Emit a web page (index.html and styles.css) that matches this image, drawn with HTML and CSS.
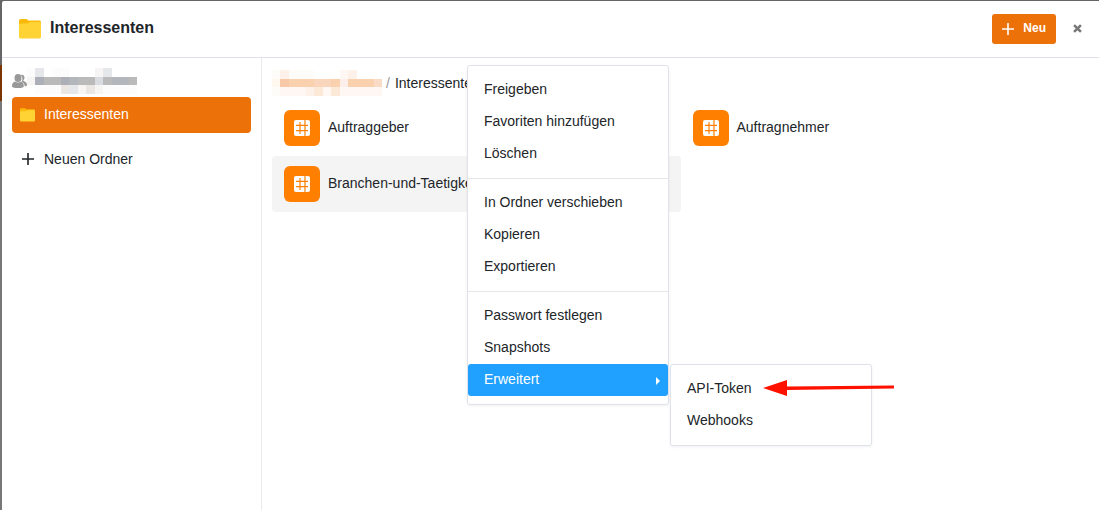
FILE: index.html
```
<!DOCTYPE html>
<html lang="de">

<head>
    <meta charset="utf-8">
    <title>Interessenten</title>
    <meta name="viewport" content="width=device-width, initial-scale=1">
    <link rel="stylesheet" href="styles.css">
</head>

<body>
    <svg class="symbols" aria-hidden="true">
        <symbol id="folder" viewBox="0 0 22 20">
            <path fill="#fbb90c" d="M0 1.5Q0 0 1.5 0h6Q8.500 0 9 1.500h11.500Q22 1.500 22 3v8H0z" />
            <path fill="#ffd333" d="M0 5.500Q0 4.500 1 4.500h8l2-1.500h10q1 0 1 1v14q0 1.500-1.500 1.500h-19Q0 19.500 0 18z" />
        </symbol>
        <symbol id="plus" viewBox="0 0 12 12">
            <path fill="none" stroke="currentColor" stroke-width="1.600" d="M6 0v12M0 6h12" />
        </symbol>
        <symbol id="table" viewBox="0 0 16 16">
            <rect width="16" height="16" rx="2" fill="#fff" />
            <path fill="none" stroke="#ff8000" stroke-width="1.200" d="M6 2v12M11 0v16M2 5.300h12M2 10.600h12" />
        </symbol>
    </svg>
    <div class="dialog">
        <header class="dialog-header">
            <svg class="title-icon"><use href="#folder" /></svg>
            <h1>Interessenten</h1>
            <button type="button" class="btn-new"><svg class="plus"><use href="#plus" /></svg>Neu</button>
            <button type="button" class="btn-close" aria-label="Schließen">
                <svg viewBox="0 0 10 10"><path fill="none" stroke="#777" stroke-width="2.800" d="M1.200 1.200l7.600 7.600M8.800 1.200L1.200 8.800" /></svg>
            </button>
        </header>
        <div class="dialog-body">
            <nav class="sidebar">
                <div class="group">
                    <svg class="group-icon" viewBox="0 0 15 14" fill="#999">
                        <path d="M8.700.9c2-.8 3.800.6 3.800 2.700 0 1.400-.6 2.500-1.300 3.100 2.300.8 3.800 1.800 3.800 4.300 0 1-.7 1.300-2.300 1.300-.2-2.200-1.200-3.700-3.200-4.700C11 5.800 10.700 2.600 8.700.9z" />
                        <ellipse cx="6" cy="4" rx="3.500" ry="4" />
                        <path d="M3 7.500Q6 9.600 9 7.500c1.900.8 2.800 2 2.800 4.500 0 1.400-1.500 2-5.800 2S0 13.400 0 12c0-2.500 1.100-3.700 3-4.500z" />
                    </svg>
                    <svg class="mosaic" viewBox="0 0 13 3" preserveAspectRatio="none" shape-rendering="crispEdges" aria-hidden="true">
                        <path fill="#fcfcfc" d="M0 0h1v1h-1zM3 0h2v1h-2zM1 2h3v1h-3zM9 2h4v1h-4z" />
                        <path fill="#e5e7ea" d="M1 0h1v1h-1zM9 0h1v1h-1zM5 2h1v1h-1z" />
                        <path fill="#f6f5f3" d="M0 1h1v1h-1zM8 0h1v1h-1zM6 2h1v1h-1zM8 2h1v1h-1z" />
                        <path fill="#e9e6e4" d="M4 2h1v1h-1zM7 2h1v1h-1z" />
                        <path fill="#acafb7" d="M1 1h1v1h-1zM4 1h1v1h-1z" />
                        <path fill="#bababa" d="M2 1h2v1h-2zM6 1h2v1h-2zM9 1h1v1h-1zM12 1h1v1h-1z" />
                        <path fill="#b3b7bb" d="M5 1h1v1h-1zM10 1h2v1h-2z" />
                        <path fill="#d8dce1" d="M8 1h1v1h-1z" />
                    </svg>
                </div>
                <a class="nav-item active" href="#"><svg class="nav-icon"><use href="#folder" /></svg>Interessenten</a>
                <button type="button" class="nav-item"><svg class="plus"><use href="#plus" /></svg>Neuen Ordner</button>
            </nav>
            <main>
                <div class="breadcrumb">
                    <svg class="mosaic" viewBox="0 0 13 3" preserveAspectRatio="none" shape-rendering="crispEdges" aria-hidden="true">
                        <path fill="#fefcf9" d="M0 0h1v1h-1zM2 0h3v1h-3zM0 2h1v1h-1z" />
                        <path fill="#fdf1ea" d="M1 0h1v1h-1zM9 0h1v1h-1zM4 2h1v1h-1z" />
                        <path fill="#fef8ee" d="M0 1h1v1h-1z" />
                        <path fill="#fef7f3" d="M8 0h1v1h-1zM1 2h3v1h-3zM6 2h1v1h-1zM8 2h5v1h-5z" />
                        <path fill="#fce8d6" d="M5 2h1v1h-1zM7 2h1v1h-1z" />
                        <path fill="#f8c9a9" d="M1 1h1v1h-1z" />
                        <path fill="#f9d1ae" d="M2 1h3v1h-3zM7 1h1v1h-1zM9 1h3v1h-3z" />
                        <path fill="#f9d6bb" d="M5 1h2v1h-2z" />
                        <path fill="#fceeea" d="M8 1h1v1h-1z" />
                        <path fill="#fadbc8" d="M12 1h1v1h-1z" />
                    </svg>
                    <span class="slash">/</span>
                    <span>Interessenten</span>
                </div>
                <div class="tables">
                    <a class="table-item" href="#"><span class="table-icon"><svg><use href="#table" /></svg></span><span class="table-name">Auftraggeber</span></a>
                    <a class="table-item" href="#"><span class="table-icon"><svg><use href="#table" /></svg></span><span class="table-name">Auftragnehmer</span></a>
                    <a class="table-item hover" href="#"><span class="table-icon"><svg><use href="#table" /></svg></span><span class="table-name">Branchen-und-Taetigkeiten</span></a>
                </div>
            </main>
        </div>
    </div>

    <div class="menu context-menu">
        <button type="button">Freigeben</button>
        <button type="button">Favoriten hinzufügen</button>
        <button type="button">Löschen</button>
        <hr>
        <button type="button">In Ordner verschieben</button>
        <button type="button">Kopieren</button>
        <button type="button">Exportieren</button>
        <hr>
        <button type="button">Passwort festlegen</button>
        <button type="button">Snapshots</button>
        <button type="button" class="selected">Erweitert <span class="caret"></span></button>
    </div>
    <div class="menu submenu">
        <button type="button">API-Token</button>
        <button type="button">Webhooks</button>
    </div>
    <svg class="arrow" viewBox="0 0 131 16" aria-hidden="true">
        <path fill="#ff1100" d="M0 8L24 0v6.500L131 5.500v3L24 10v6z" />
    </svg>
</body>

</html>
```
FILE: styles.css
```
* {
    box-sizing: border-box;
}

body {
    display: flex;
    min-height: 100vh;
    margin: 0;
    padding: 1px 0 0 2px;
    background: linear-gradient(#666 65px, #7a3500 65px, #7a3500 101px, #777 101px);
    color: #212529;
    font-family: "Liberation Sans", Arial, sans-serif;
    font-size: 14px;
    line-height: 20px;
}

button {
    border: 0;
    background: none;
    color: inherit;
    font: inherit;
    cursor: pointer;
}

a {
    color: inherit;
    text-decoration: none;
}

svg {
    display: block;
    flex: none;
}

.symbols {
    position: absolute;
    width: 0;
    height: 0;
}

.dialog {
    flex: 1;
    display: flex;
    flex-direction: column;
    background: #fff;
    border-top-left-radius: 2px;
}

.dialog-header {
    display: flex;
    align-items: center;
    height: 57px;
    padding: 0 16px;
    border-bottom: 1px solid #e0e0e8;
}

.title-icon {
    width: 24px;
    height: 20px;
}

.dialog-header h1 {
    flex: 1;
    margin: 0 0 2px 8px;
    font-size: 16px;
}

.plus {
    width: 12px;
    height: 12px;
}

.btn-new {
    display: flex;
    align-items: center;
    gap: 9px;
    height: 30px;
    padding: 0 10px 2px;
    border-radius: 3px;
    background: #ed7109;
    color: #fff;
    font-size: 12px;
    font-weight: bold;
}

.btn-new .plus {
    margin-top: 2px;
}

.btn-close {
    margin: 0 1px 2px 17px;
    padding: 0;
}

.btn-close svg {
    width: 9px;
    height: 9px;
}

.dialog-body {
    flex: 1;
    display: flex;
}

.sidebar {
    flex: none;
    width: 260px;
    padding: 10px;
    border-right: 1px solid #e9e9ee;
}

.group {
    display: flex;
    align-items: center;
    height: 29px;
    padding-bottom: 4px;
}

.group-icon {
    width: 15px;
    height: 14px;
}

.mosaic {
    width: 110px;
    height: 26px;
}

.nav-item {
    display: flex;
    align-items: center;
    gap: 9px;
    width: 100%;
    height: 36px;
    padding: 0 8px 2px;
    border-radius: 4px;
    text-align: left;
}

.nav-item.active {
    margin-bottom: 9px;
    background: #ed7109;
    color: #fff;
}

.nav-icon {
    width: 15px;
    height: 14px;
    margin-top: 2px;
}

.nav-item .plus {
    margin: 0 1px 0 2px;
}

main {
    flex: 1;
    padding: 10px;
}

.breadcrumb {
    display: flex;
    align-items: center;
    height: 32px;
    padding-bottom: 2px;
}

.slash {
    margin: 0 5px 0 4px;
    color: #999;
}

.tables {
    display: grid;
    grid-template-columns: 1fr 1fr;
}

.table-item {
    display: flex;
    align-items: center;
    gap: 8px;
    height: 56px;
    padding: 0 12px;
    border-radius: 4px;
}

.table-item.hover {
    background: #f4f4f4;
}

.table-name {
    padding-bottom: 2px;
}

.table-icon {
    display: grid;
    place-items: center;
    width: 36px;
    height: 36px;
    border-radius: 6px;
    background: #ff8000;
}

.table-icon svg {
    width: 16px;
    height: 16px;
}

/* context menu and its submenu float over the dialog */
.menu {
    position: absolute;
    width: 202px;
    padding: 8px 0;
    border: 1px solid #dfe2ea;
    border-radius: 3px;
    background: #fff;
    box-shadow: 0 1px 3px rgba(0, 0, 0, 0.06);
}

.menu button {
    display: flex;
    align-items: center;
    justify-content: space-between;
    width: 100%;
    height: 32px;
    padding: 0 8px 2px 16px;
}

.menu hr {
    margin: 8px 0;
    border: 0;
    border-top: 1px solid #e6e7ea;
}

.menu .selected {
    border-radius: 3px;
    background: #20a0ff;
    color: #fff;
}

.caret {
    margin-top: 4px;
    border: 4px solid transparent;
    border-left-color: #fff;
    border-right: 0;
}

.context-menu {
    top: 65px;
    left: 467px;
}

.submenu {
    top: 364px;
    left: 670px;
}

.arrow {
    position: absolute;
    top: 380px;
    left: 763px;
    width: 131px;
    height: 16px;
}
```
